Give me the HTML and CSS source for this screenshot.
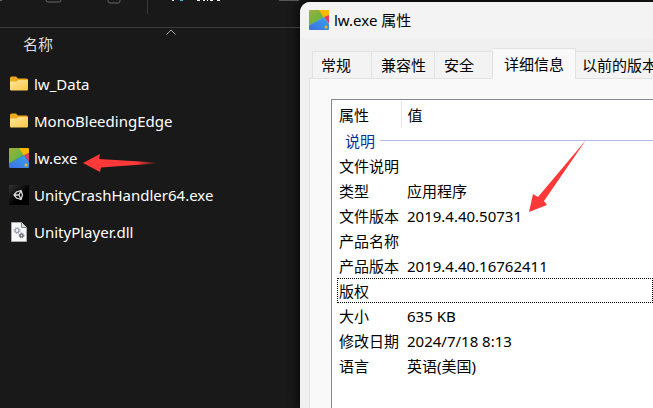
FILE: index.html
```html
<!DOCTYPE html>
<html lang="zh-CN">
<head>
  <meta charset="UTF-8">
  <meta name="viewport" content="width=device-width, initial-scale=1.0">
  <title>lw.exe 属性</title>
  <link rel="stylesheet" href="styles.css">
</head>
<body>

  <!-- 图标定义 -->
  <svg class="defs" width="0" height="0" aria-hidden="true">
    <defs>
      <linearGradient id="gold" x1="0" y1="0" x2="1" y2="1">
        <stop offset="0" stop-color="#ffe7a0"/>
        <stop offset="1" stop-color="#fdc644"/>
      </linearGradient>
      <linearGradient id="green" x1="0" y1="0" x2="1" y2="1">
        <stop offset="0" stop-color="#9fb03a"/>
        <stop offset="1" stop-color="#4cb748"/>
      </linearGradient>
      <linearGradient id="blue" x1="0" y1="1" x2="1" y2="0">
        <stop offset="0" stop-color="#3f6fe0"/>
        <stop offset="1" stop-color="#35a5ea"/>
      </linearGradient>
      <linearGradient id="dark" x1="0" y1="0" x2="1" y2="1">
        <stop offset="0" stop-color="#343434"/>
        <stop offset="0.6" stop-color="#000"/>
      </linearGradient>
      <linearGradient id="tail" x1="0" y1="0" x2="1" y2="0">
        <stop offset="0.75" stop-color="#ff3838"/>
        <stop offset="1" stop-color="#ff3838" stop-opacity="0.1"/>
      </linearGradient>
      <symbol id="folder" viewBox="0 0 20 20">
        <path d="M1 4q0-1.500 1.500-1.500h4.500l2 2h8.500q1.500 0 1.500 1.500v4h-18z" fill="#f0a91b"/>
        <path d="M1 7.500h6.500l2-1.500h9.500v9.500q0 1-1 1h-16q-1 0-1-1z" fill="url(#gold)"/>
      </symbol>
      <symbol id="app" viewBox="0 0 20 20">
        <path d="M1 0h10l4 7-15 9v-15q0-1 1-1z" fill="url(#green)"/>
        <path d="M10 0h9q1 0 1 1v4l-5 3z" fill="#fcb900"/>
        <path d="M20 5v9l-5-7z" fill="#e8395d"/>
        <path d="M0 15.500l15-8.500 5 7v5q0 1-1 1h-18q-1 0-1-1z" fill="url(#blue)"/>
        <circle cx="17" cy="17" r="1.500" fill="#e8b923"/>
      </symbol>
      <symbol id="unity" viewBox="0 0 20 20">
        <path d="M0 0h20v20h-20z" fill="url(#dark)"/>
        <path d="M5 10l2.500-3 4.500-1.500 1.500 4.500-1.500 4.500-4.500-1.500zM5 10h5M10 10l2-4.500M10 10l2 4.500" fill="none" stroke="#ddd" stroke-width="1.300"/>
      </symbol>
      <symbol id="dll" viewBox="0 0 20 20">
        <path d="M2.500 0.500h10l5 5v14h-15z" fill="#f8f8f8" stroke="#aaa"/>
        <path d="M12.500 0.500v5h5" fill="#ddd" stroke="#888"/>
        <circle cx="8" cy="8.500" r="2" fill="none" stroke="#8d9bad" stroke-width="1.200"/>
        <circle cx="8" cy="8.500" r="3" fill="none" stroke="#8d9bad" stroke-dasharray="1.200 1.156"/>
        <circle cx="12.500" cy="13.500" r="1.500" fill="none" stroke="#4d5966" stroke-width="1.200"/>
        <circle cx="12.500" cy="13.500" r="2.400" fill="none" stroke="#4d5966" stroke-dasharray="1 0.885"/>
      </symbol>
    </defs>
  </svg>

  <div class="desktop">

    <!-- 资源管理器 -->
    <main class="explorer">
      <div class="toolbar">
        <svg width="300" height="27" viewBox="0 0 300 27" aria-hidden="true">
          <path d="M0 0.500h2M46 0q0 2 2 2h11q2 0 2-2M108 0v1q0 2 2 2h8q2 0 2-2v-1" fill="none" stroke="#666"/>
          <path d="M147.500 0v14" stroke="#383838"/>
          <path d="M172 0h2v1h-2z" fill="#ddd"/>
          <path d="M180 0h3v1h-3z" fill="#41b5f0"/>
          <path d="M197 0h3M203 0h2M207 0h1M210 0h3M217 0h3" stroke="#eee" stroke-width="2"/>
          <path d="M279 0h20" stroke="#555" stroke-width="2"/>
        </svg>
      </div>
      <div class="column-head">
        <span>名称</span>
        <svg class="sort" width="10" height="6" viewBox="0 0 10 6" aria-hidden="true">
          <path d="M0.500 5.500l4.500-4.500 4.500 4.500" fill="none" stroke="#aaa"/>
        </svg>
      </div>
      <ul class="files">
        <li><svg class="icon"><use href="#folder"/></svg>lw_Data</li>
        <li><svg class="icon"><use href="#folder"/></svg>MonoBleedingEdge</li>
        <li><svg class="icon"><use href="#app"/></svg>lw.exe</li>
        <li><svg class="icon"><use href="#unity"/></svg>UnityCrashHandler64.exe</li>
        <li><svg class="icon"><use href="#dll"/></svg>UnityPlayer.dll</li>
      </ul>
      <svg class="arrow arrow-file" width="74" height="18" viewBox="0 0 74 18" aria-hidden="true">
        <path d="M0 9l17-9-1 5 57 3.500v1l-55 4-1 4.500z" fill="url(#tail)"/>
      </svg>
    </main>

    <!-- 属性窗口 -->
    <section class="dialog">
      <header class="title">
        <svg class="icon"><use href="#app"/></svg>
        <span>lw.exe 属性</span>
      </header>
      <div class="tabs" role="tablist">
        <button class="tab tab-first" role="tab">常规</button>
        <button class="tab" role="tab">兼容性</button>
        <button class="tab" role="tab">安全</button>
        <button class="tab active" role="tab" aria-selected="true">详细信息</button>
        <button class="tab tab-last" role="tab">以前的版本</button>
      </div>
      <div class="panel">
        <div class="details">
          <table>
            <thead>
              <tr><th>属性</th><th>值</th></tr>
            </thead>
            <tbody>
              <tr class="group"><td colspan="2"><div>说明</div></td></tr>
              <tr><td>文件说明</td><td></td></tr>
              <tr><td>类型</td><td>应用程序</td></tr>
              <tr><td>文件版本</td><td>2019.4.40.50731</td></tr>
              <tr><td>产品名称</td><td></td></tr>
              <tr><td>产品版本</td><td>2019.4.40.16762411</td></tr>
              <tr class="focus"><td>版权</td><td></td></tr>
              <tr><td>大小</td><td>635 KB</td></tr>
              <tr><td>修改日期</td><td>2024/7/18 8:13</td></tr>
              <tr><td>语言</td><td>英语(美国)</td></tr>
            </tbody>
          </table>
          <svg class="arrow arrow-version" width="58" height="73" viewBox="0 0 58 73" aria-hidden="true">
            <path d="M0 72l4-18 5 3 48-57-42 61 3 4z" fill="#ff3838"/>
          </svg>
        </div>
      </div>
    </section>

  </div>

</body>
</html>
```

FILE: styles.css
```css
* {
  box-sizing: border-box;
}

body {
  margin: 0;
  background: #191919;
  font-family: "Noto Sans", "Noto Sans CJK SC", sans-serif;
  font-size: 15px;
  line-height: 24px;
}

.defs {
  position: absolute;
}

.desktop {
  display: grid;
  grid-template-columns: 300px 1fr;
  min-height: 100vh;
  overflow: hidden;
}

.icon {
  width: 20px;
  height: 20px;
  flex: none;
}

/* 资源管理器 */
.explorer {
  position: relative;
  color: #fff;
}

.toolbar {
  height: 28px;
  border-bottom: 1px solid #3b3b3b;
}

.toolbar svg {
  display: block;
}

.column-head {
  position: relative;
  height: 37px;
  padding: 4px 23px;
  color: #dedede;
}

.sort {
  position: absolute;
  top: 1px;
  left: 166px;
}

.files {
  list-style: none;
  margin: 0;
  padding: 0 9px;
}

.files li {
  display: flex;
  align-items: center;
  gap: 5px;
  height: 37px;
}

.arrow {
  position: absolute;
}

.arrow-file {
  top: 154px;
  left: 83px;
}

/* 属性窗口 */
.dialog {
  display: flex;
  flex-direction: column;
  min-width: 0;
  margin-top: 2px;
  background: #f0f0f0;
  border-top-left-radius: 10px;
  color: #000;
  box-shadow: 0 0 12px #000;
  overflow: hidden;
}

.title {
  display: flex;
  align-items: center;
  gap: 5px;
  height: 36px;
  padding: 0 9px;
  background: #f3f3f3;
}

.tabs {
  display: flex;
  align-items: flex-end;
  height: 40px;
  padding-left: 12px;
}

.tab {
  flex: none;
  height: 27px;
  padding: 0 8px;
  border: 1px solid #e2e2e2;
  border-width: 1px 1px 0 0;
  background: #f3f3f3;
  color: #000;
  font: inherit;
  line-height: 24px;
  text-align: left;
}

.tab-first {
  width: 60px;
  border-left-width: 1px;
}

.tab:nth-child(2) {
  width: 63px;
  padding-left: 9px;
}

.tab:nth-child(3) {
  width: 58px;
  padding-left: 9px;
}

.tab.active {
  z-index: 1;
  width: 83px;
  height: 31px;
  margin-bottom: -1px;
  padding: 0 11px;
  background: #f9f9f9;
}

.tab-last {
  width: 100px;
  padding-left: 6px;
}

.panel {
  flex: 1;
  margin-left: 9px;
  padding: 20px 0 0 21px;
  border: 1px solid #e2e2e2;
  border-width: 1px 0 0 1px;
  background: #f9f9f9;
}

.details {
  position: relative;
  height: 100%;
  padding: 1px 0 0 5px;
  border: 1px solid #828790;
  border-width: 1px 0 0 1px;
  background: #fff;
}

table {
  width: 100%;
  border-collapse: collapse;
  table-layout: fixed;
}

th,
td {
  height: 25px;
  padding: 0 0 0 2px;
  font-weight: normal;
  text-align: left;
  white-space: nowrap;
}

th {
  height: 27px;
}

th:first-child {
  width: 64px;
  border-right: 1px solid #e5e5e5;
}

th + th,
td + td {
  padding-left: 6px;
}

.group div {
  display: flex;
  align-items: center;
  gap: 5px;
  padding-left: 6px;
  color: #003399;
}

.group div::after {
  content: "";
  flex: 1;
  height: 1px;
  background: #b0bfde;
}

/* 右侧超出窗口边缘 */
.focus {
  outline: 1px dotted #000;
  outline-offset: -1px;
}

.arrow-version {
  top: 40px;
  left: 197px;
}
```
